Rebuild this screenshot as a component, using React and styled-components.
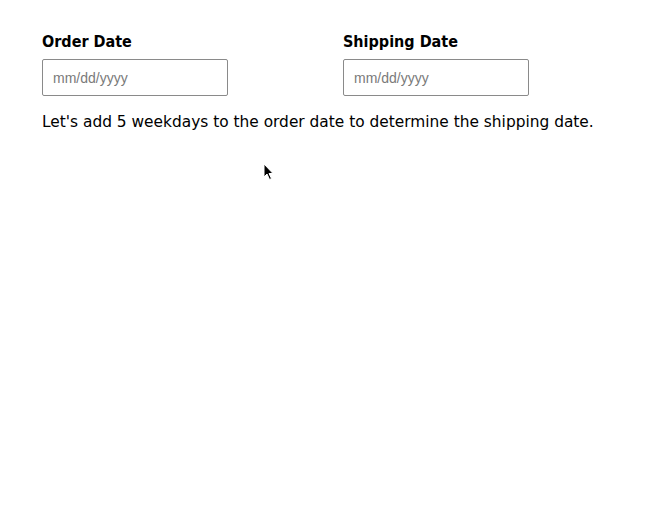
import React from "react";
import styled, { createGlobalStyle } from "styled-components";

const Global = createGlobalStyle`
  html, body { margin: 0; padding: 0; background: #fff; }
  body { font-family: "DejaVu Sans", Verdana, sans-serif; color: #000; }
`;

const Page = styled.div`
  position: relative;
  width: 660px;
  height: 520px;
  padding: 33px 0 0 42px;
  box-sizing: border-box;
`;

const Fields = styled.div`
  display: grid;
  grid-template-columns: 301px 301px;
`;

const Field = styled.div`
  display: flex;
  flex-direction: column;
  gap: 8px;
`;

const Label = styled.label`
  font-family: "DejaVu Sans Condensed", "DejaVu Sans", sans-serif;
  font-size: 16px;
  font-weight: bold;
  line-height: 18px;
`;

const DateBox = styled.div`
  width: 186px;
  height: 37px;
  box-sizing: border-box;
  border: 1px solid #8a8a8a;
  border-radius: 2px;
  padding: 0 10px;
  display: flex;
  align-items: center;
  font-family: "Liberation Sans", Arial, sans-serif;
  font-size: 14px;
  color: #7a7a7a;
`;

const Note = styled.p`
  margin: 16px 0 0;
  font-size: 15.4px;
  line-height: 20px;
`;

const Cursor = styled.svg`
  position: absolute;
  left: 263px;
  top: 163px;
`;

export default function App() {
  return (
    <>
      <Global />
      <Page>
        <Fields>
          <Field>
            <Label>Order Date</Label>
            <DateBox>mm/dd/yyyy</DateBox>
          </Field>
          <Field>
            <Label>Shipping Date</Label>
            <DateBox>mm/dd/yyyy</DateBox>
          </Field>
        </Fields>
        <Note>Let's add 5 weekdays to the order date to determine the shipping date.</Note>
        <Cursor width="12" height="18" viewBox="0 0 12 18">
          <path d="M1 1 L1 14 L4 11 L6.5 16.5 L8.5 15.5 L6 10.5 L10 10.5 Z" fill="#000" stroke="#fff" strokeWidth="1" />
        </Cursor>
      </Page>
    </>
  );
}
